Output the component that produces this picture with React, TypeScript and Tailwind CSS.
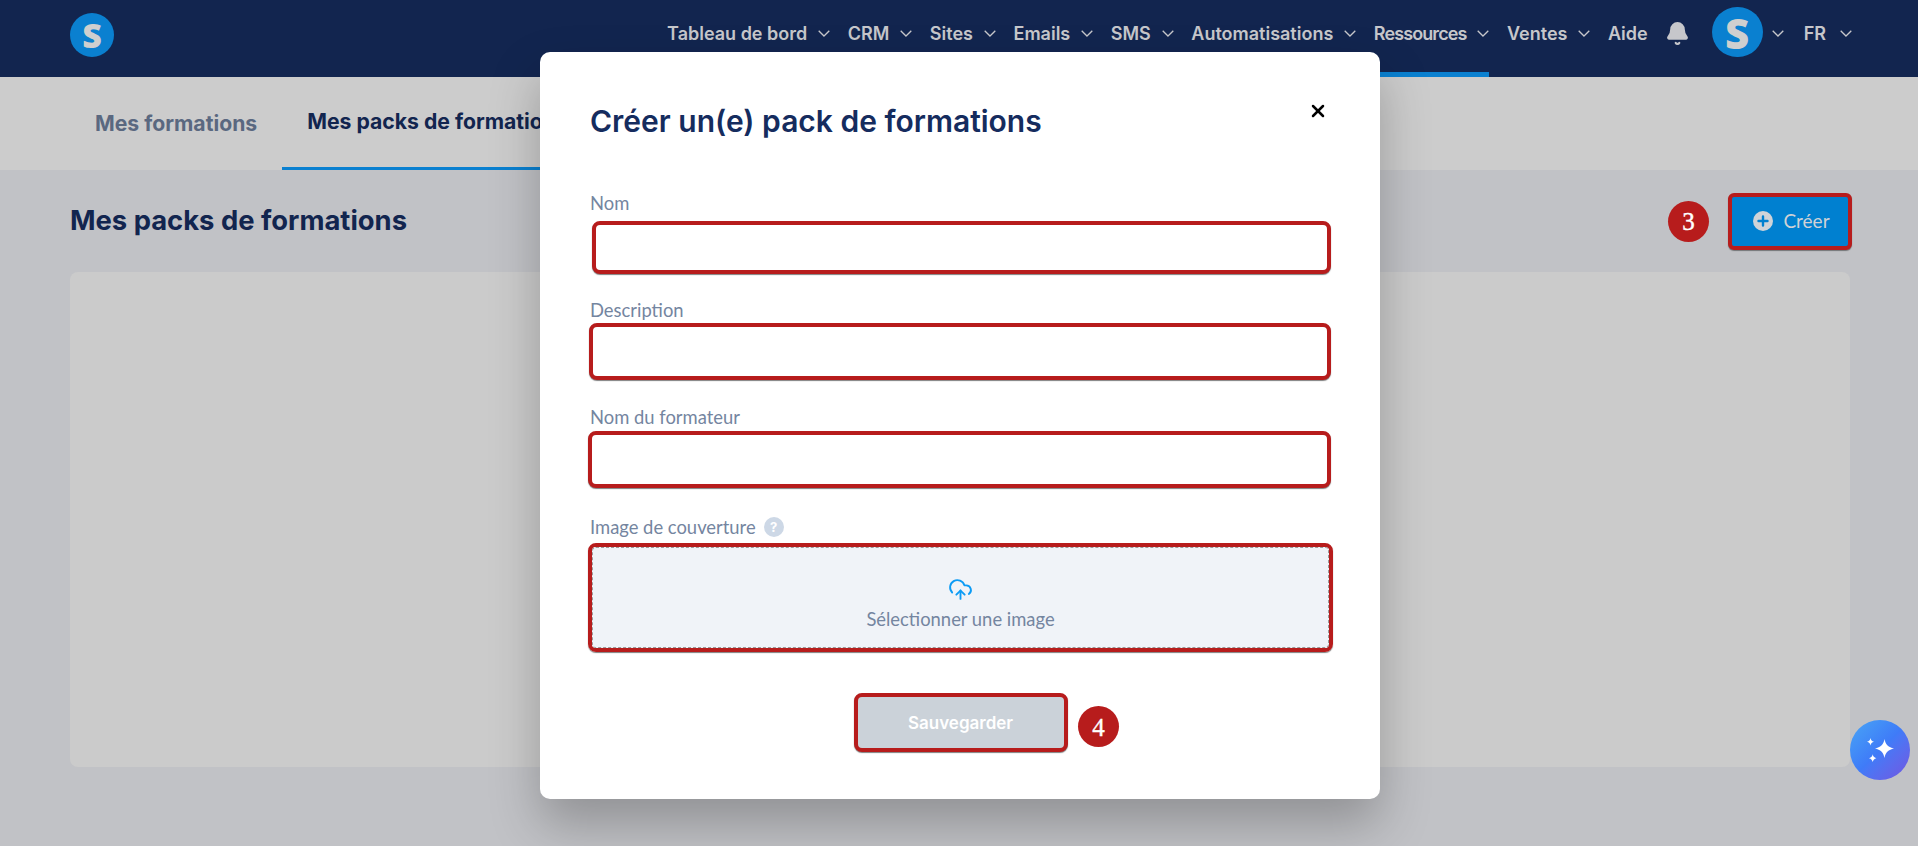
import { Bell, CloudUpload, X } from 'lucide-react';

const navItems = [
  { label: 'Tableau de bord', caret: true },
  { label: 'CRM', caret: true },
  { label: 'Sites', caret: true },
  { label: 'Emails', caret: true },
  { label: 'SMS', caret: true },
  { label: 'Automatisations', caret: true },
  { label: 'Ressources', caret: true, active: true },
  { label: 'Ventes', caret: true },
  { label: 'Aide', caret: false },
];

function Caret({ className }: { className: string }) {
  return (
    <svg viewBox="0 0 12 7" fill="none" stroke="currentColor" strokeWidth="1.3" className={className}>
      <path d="M.7.7 6 6l5.300-5.300" />
    </svg>
  );
}

function Logo({ big }: { big?: boolean }) {
  return (
    <div
      className={
        big
          ? 'flex h-[50px] w-[51px] items-center justify-center rounded-full bg-[#0a80d0] text-[42px] font-extrabold text-[#cfcfcf]'
          : 'flex h-[44px] w-[44px] items-center justify-center rounded-full bg-[#0a80d0] text-[34px] font-extrabold text-[#cfcfcf]'
      }
      style={{ fontFamily: '"Open Sans", sans-serif' }}
    >
      S
    </div>
  );
}

function Header() {
  return (
    <header className="flex h-[77px] items-center justify-between bg-[#12254f] pl-[70px] pr-[66px]">
      <div className="mb-[7px]">
        <Logo />
      </div>
      <nav className="flex h-full items-center font-['Inter',sans-serif] text-[18px] font-semibold text-[#c6c7cb]">
        {navItems.map((item) => (
          <div
            key={item.label}
            className={
              item.active
                ? 'ml-[17.500px] flex h-full items-center border-b-[5px] border-[#0a80d0] pb-[6px] tracking-[-0.9px]'
                : 'ml-[17.500px] flex h-full items-center pb-[11px]'
            }
          >
            <span>{item.label}</span>
            {item.caret && <Caret className="ml-[11px] h-[7px] w-[12px]" />}
          </div>
        ))}
        <Bell className="mb-[11px] ml-[17px] h-[25px] w-[25px] fill-[#c6c7cb]" />
        <div className="mb-[13px] ml-[22px]">
          <Logo big />
        </div>
        <Caret className="mb-[11px] ml-[9px] h-[7px] w-[12px]" />
        <span className="mb-[11px] ml-[20px]">FR</span>
        <Caret className="mb-[11px] ml-[14px] h-[7px] w-[12px]" />
      </nav>
    </header>
  );
}

function Step({ n }: { n: number }) {
  return (
    <div className="flex h-[41px] w-[41px] items-center justify-center rounded-full bg-[#b71c1c] pt-[2px] font-['Liberation_Serif',serif] text-[25px] text-white [-webkit-text-stroke:0.4px_white]">
      {n}
    </div>
  );
}

function Field({ label, className }: { label: string; className: string }) {
  return (
    <div>
      <label className="block text-[18.400px] leading-[20px] text-[#7485a0]">{label}</label>
      <div className={className} />
    </div>
  );
}

function Modal() {
  return (
    <div className="absolute left-[540px] top-[52px] h-[747px] w-[840px] rounded-[10px] bg-white pl-[48px] pr-[49px] font-['Lato',sans-serif] shadow-[0_25px_50px_rgba(0,0,0,0.25)]">
      <div className="flex items-start justify-between">
        <h2 className="ml-[2px] mt-[50px] font-['Inter',sans-serif] text-[30px] font-semibold leading-[38px] text-[#152c5e]">
          Créer un(e) pack de formations
        </h2>
        <X className="mr-[3px] mt-[49px] h-[20px] w-[20px] text-black" strokeWidth={3} />
      </div>

      <div className="ml-[2px] mt-[53px]">
        <Field
          label="Nom"
          className="ml-[2px] mt-[8px] h-[53px] rounded-[8px] border-[4px] border-[#b71c1c] bg-white shadow-[0_1px_1px_rgba(0,0,0,0.5)]"
        />
      </div>
      <div className="ml-[2px] mt-[26px]">
        <Field
          label="Description"
          className="ml-[-1px] mt-[3px] h-[57px] rounded-[8px] border-[4px] border-[#b71c1c] bg-white shadow-[0_1px_1px_rgba(0,0,0,0.5)]"
        />
      </div>
      <div className="ml-[2px] mt-[27px]">
        <Field
          label="Nom du formateur"
          className="ml-[-2px] mt-[4px] h-[57px] rounded-[8px] border-[4px] border-[#b71c1c] bg-white shadow-[0_1px_1px_rgba(0,0,0,0.5)]"
        />
      </div>

      <div className="ml-[2px] mt-[29px]">
        <div className="flex h-[20px] items-center gap-[8px] text-[18.400px] leading-[20px] text-[#7485a0]">
          <span>Image de couverture</span>
          <span className="flex h-[20px] w-[20px] items-center justify-center rounded-full bg-[#cdd8e6] font-['Inter',sans-serif] text-[13px] font-bold text-white">
            ?
          </span>
        </div>
        <div className="ml-[-2px] mr-[-2px] mt-[6px] h-[109px] rounded-[8px] border-[4px] border-[#b71c1c] shadow-[0_1px_1px_rgba(0,0,0,0.5)]">
          <div className="flex h-full flex-col items-center justify-center rounded-[4px] border border-dashed border-[#9a9a9a] bg-[#f0f3f8] pt-[15px] text-[18.400px] text-[#7485a0]">
            <CloudUpload className="h-[25px] w-[25px] text-[#0c9bf5]" strokeWidth={1.8} />
            <span className="mt-[4px]">Sélectionner une image</span>
          </div>
        </div>
      </div>

      <div className="relative mt-[41px] flex justify-center pl-[2px]">
        <div className="flex h-[59px] w-[214px] items-center justify-center rounded-[8px] border-[4px] border-[#b71c1c] bg-[#cbd2d9] pt-[3px] font-['Inter',sans-serif] text-[17px] font-semibold text-white shadow-[0_1px_1px_rgba(0,0,0,0.5)]">
          Sauvegarder
        </div>
        <div className="absolute left-[490px] top-[13px]">
          <Step n={4} />
        </div>
      </div>
    </div>
  );
}

export default function App() {
  return (
    <div className="relative h-[846px] w-[1918px] overflow-hidden bg-[#c1c2c6] font-['Inter',sans-serif]">
      <Header />

      <div className="flex h-[93px] items-end bg-[#cccccc] pl-[70px] text-[21.200px] font-bold">
        <div className="flex h-full items-center px-[25px] text-[#5a6880]">Mes formations</div>
        <div className="flex h-full items-center border-b-[3px] border-[#0a80d0] px-[25px] text-[#12254f]">
          Mes packs de formations
        </div>
      </div>

      <main className="pl-[70px] pr-[66px]">
        <div className="flex h-[102px] items-center justify-between">
          <h1 className="text-[27.400px] font-bold text-[#12254f]">Mes packs de formations</h1>
          <div className="flex items-center gap-[19px]">
            <Step n={3} />
            <button className="flex h-[57px] w-[124px] items-center justify-center gap-[10px] rounded-[6px] border-[4px] border-[#b71c1c] bg-[#0080d0] pl-[3px] font-['Lato',sans-serif] text-[19px] text-[#d0d2d6] shadow-[0_1px_1px_rgba(0,0,0,0.4)]">
              <svg viewBox="0 0 20 20" className="h-[20px] w-[20px]">
                <circle cx="10" cy="10" r="10" fill="#cfd3d8" />
                <path d="M10 5.500v9M5.500 10h9" stroke="#0080d0" strokeWidth="2.400" strokeLinecap="round" />
              </svg>
              Créer
            </button>
          </div>
        </div>
        <div className="mr-[2px] h-[495px] rounded-[8px] bg-[#cbcbcb]" />
      </main>

      <Modal />

      <div className="absolute left-[1850px] top-[720px] h-[60px] w-[60px] rounded-full bg-gradient-to-br from-[#4aa5f5] via-[#3f7bf8] to-[#6f55e0]">
        <svg viewBox="0 0 60 60" className="h-[60px] w-[60px] fill-white">
          <path d="M34.500 19C35.500 24.500 38.500 27.500 44 28.500C38.500 29.500 35.500 32.500 34.500 38C33.500 32.500 30.500 29.500 25 28.500C30.500 27.500 33.500 24.500 34.500 19z" />
          <path d="M20.500 18C21 20.200 21.800 21 24 21.700C21.800 22.400 21 23.200 20.500 25.400C20 23.200 19.200 22.400 17 21.700C19.200 21 20 20.200 20.500 18z" />
          <path d="M22.700 34.300C23.200 36.600 24 37.400 26.400 38.200C24 39 23.200 39.800 22.700 42.100C22.200 39.800 21.400 39 19 38.200C21.400 37.400 22.200 36.600 22.700 34.300z" />
        </svg>
      </div>
    </div>
  );
}
